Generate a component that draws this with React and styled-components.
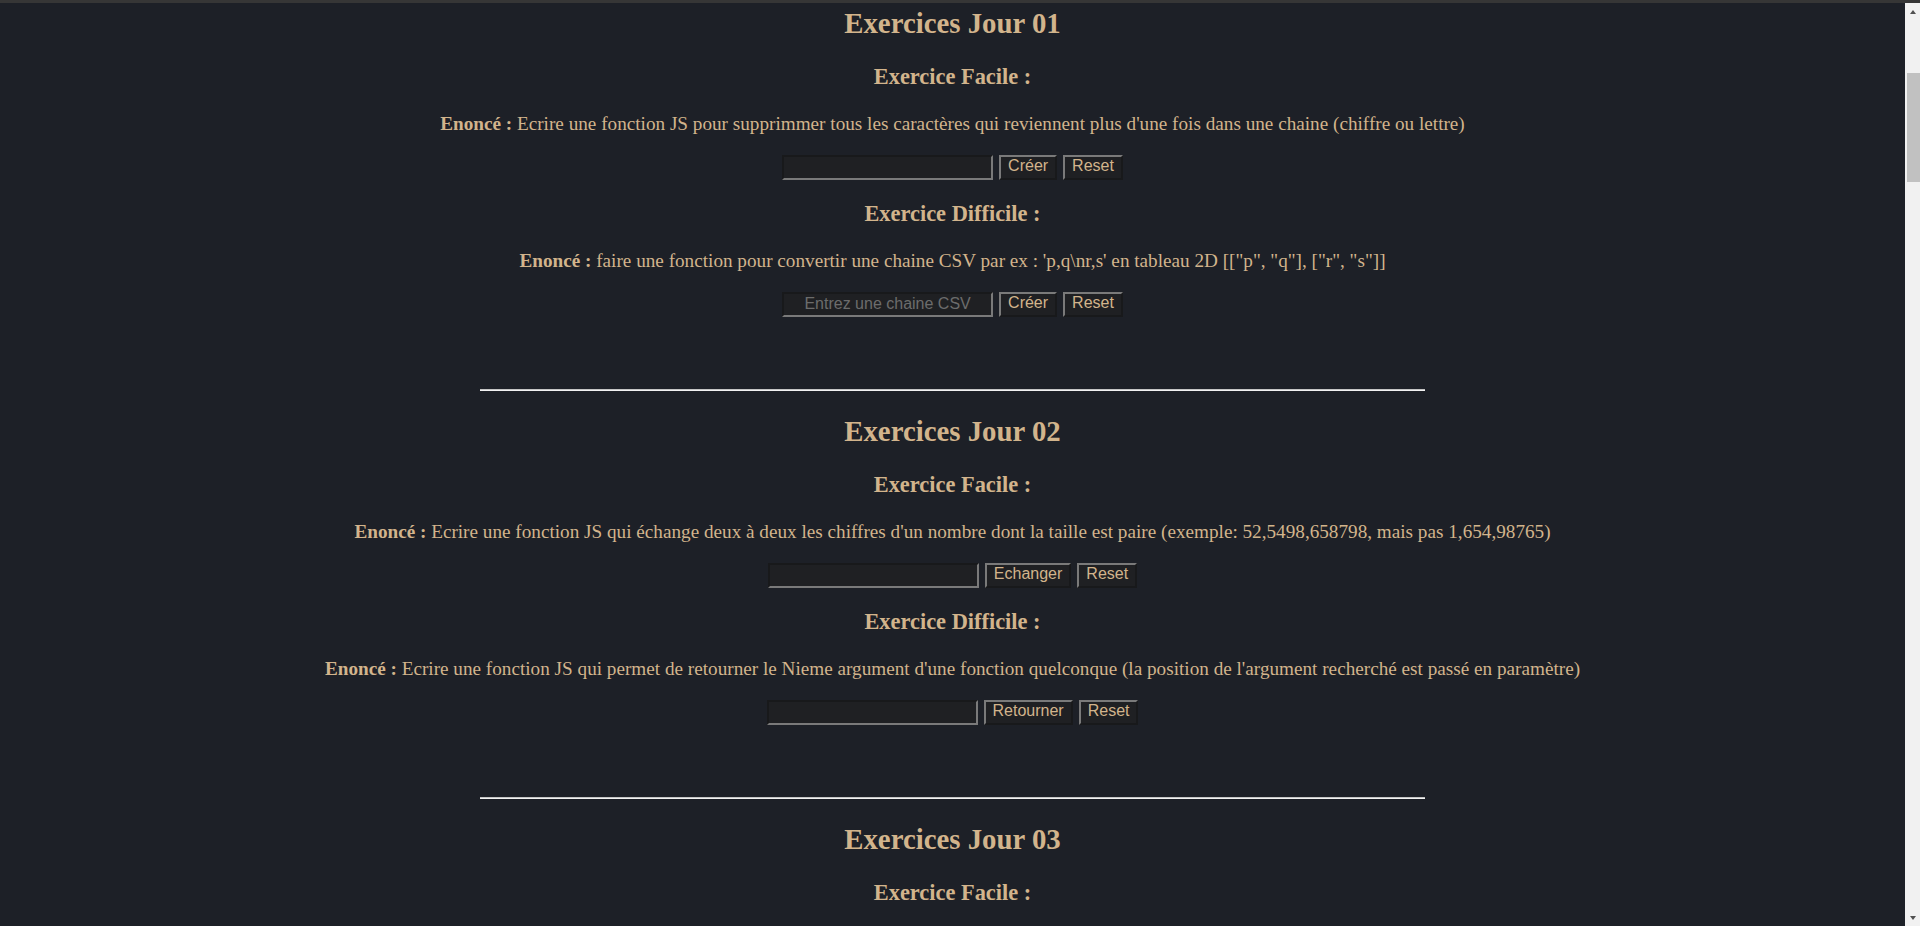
import React from "react";
import styled, { createGlobalStyle } from "styled-components";

const GlobalStyle = createGlobalStyle`
  html, body {
    margin: 0;
    padding: 0;
    height: 100%;
    overflow: hidden;
    background: #1d2027;
  }
`;

const Window = styled.div`
  display: flex;
  flex-direction: column;
  height: 100vh;
`;

const TopBar = styled.div`
  flex: none;
  height: 3px;
  background: #363636;
`;

const Viewport = styled.div`
  flex: 1;
  min-height: 0;
  display: flex;
`;

const Scroller = styled.main`
  flex: 1;
  min-width: 0;
  overflow-y: auto;
  scrollbar-width: none;
  background: #1d2027;
  color: #d2b48c;
  font-family: "Liberation Serif", "Times New Roman", serif;
  padding-top: 3px;
  box-sizing: border-box;

  &::-webkit-scrollbar {
    display: none;
  }
`;

/* classic scrollbar column, as in the screenshot */
const Rail = styled.div`
  flex: none;
  width: 15px;
  display: flex;
  flex-direction: column;
  background: #f1f1f1;
`;

const ArrowButton = styled.div`
  flex: none;
  height: 17px;
  display: flex;
  align-items: center;
  justify-content: center;

  &::before {
    content: "";
    width: 0;
    height: 0;
    border-left: 3.5px solid transparent;
    border-right: 3.5px solid transparent;
    ${(p) =>
      p.down
        ? "border-top: 4px solid #505050;"
        : "border-bottom: 4px solid #505050;"}
  }
`;

const Thumb = styled.div`
  flex: none;
  margin: 53px 0 0 2px;
  height: 109px;
  background: #c1c1c1;
`;

const Track = styled.div`
  flex: 1;
`;

const Day = styled.section`
  display: flex;
  flex-direction: column;
  align-items: center;
`;

const DayTitle = styled.h1`
  margin: 0 0 23px;
  font-size: 28.8px;
  line-height: 34px;
  font-weight: bold;
`;

const Exercise = styled.div`
  display: flex;
  flex-direction: column;
  align-items: center;
  margin-bottom: ${(p) => (p.last ? "72px" : "20px")};
`;

const Level = styled.h2`
  margin: 0 0 22px;
  font-size: 22.4px;
  line-height: 28px;
  font-weight: bold;
`;

const Statement = styled.p`
  margin: 0 0 20px;
  font-size: 19.2px;
  line-height: 22px;
  text-align: center;

  b {
    font-weight: bold;
  }
`;

const Form = styled.form`
  display: flex;
  justify-content: center;
  gap: 6px;
  height: 25px;
`;

const Input = styled.input`
  box-sizing: border-box;
  width: 211px;
  height: 25px;
  padding: 0 2px 2px;
  border-width: 2px;
  border-style: solid;
  border-color: #18191b #7a7a7a #7a7a7a #18191b;
  background: #1f2023;
  color: #d2b48c;
  font-family: "Liberation Sans", Arial, sans-serif;
  font-size: 16px;
  text-align: center;
  outline: none;

  &::placeholder {
    color: #6c6c6c;
  }
`;

const Button = styled.button`
  box-sizing: border-box;
  height: 25px;
  padding: 0 7px 3px;
  border-width: 2px;
  border-style: solid;
  border-color: #7a7a7a #18191b #18191b #7a7a7a;
  background: #1f2023;
  color: #d2b48c;
  font-family: "Liberation Sans", Arial, sans-serif;
  font-size: 16px;
  line-height: 18px;
  cursor: pointer;
`;

const Rule = styled.hr`
  width: 945px;
  height: 0;
  margin: 0 auto 23px;
  border: none;
  border-top: 1px solid #c4c4c4;
  border-bottom: 1px solid #f2f2f2;
`;

const days = [
  {
    n: "01",
    exercises: [
      {
        level: "Facile",
        text: "Ecrire une fonction JS pour supprimmer tous les caractères qui reviennent plus d'une fois dans une chaine (chiffre ou lettre)",
        action: "Créer",
      },
      {
        level: "Difficile",
        text: "faire une fonction pour convertir une chaine CSV par ex : 'p,q\\nr,s' en tableau 2D [[\"p\", \"q\"], [\"r\", \"s\"]]",
        action: "Créer",
        placeholder: "Entrez une chaine CSV",
      },
    ],
  },
  {
    n: "02",
    exercises: [
      {
        level: "Facile",
        text: "Ecrire une fonction JS qui échange deux à deux les chiffres d'un nombre dont la taille est paire (exemple: 52,5498,658798, mais pas 1,654,98765)",
        action: "Echanger",
      },
      {
        level: "Difficile",
        text: "Ecrire une fonction JS qui permet de retourner le Nieme argument d'une fonction quelconque (la position de l'argument recherché est passé en paramètre)",
        action: "Retourner",
      },
    ],
  },
];

const ExerciseBlock = ({ level, text, action, placeholder, last }) => (
  <Exercise last={last}>
    <Level>Exercice {level} :</Level>
    <Statement>
      <b>Enoncé :</b> {text}
    </Statement>
    <Form onSubmit={(e) => e.preventDefault()}>
      <Input type="text" placeholder={placeholder} />
      <Button type="submit">{action}</Button>
      <Button type="reset">Reset</Button>
    </Form>
  </Exercise>
);

const App = () => {
  return (
    <>
      <GlobalStyle />
      <Window>
        <TopBar />
        <Viewport>
          <Scroller>
            {days.map((day) => (
              <React.Fragment key={day.n}>
                <Day>
                  <DayTitle>Exercices Jour {day.n}</DayTitle>
                  {day.exercises.map((ex, i) => (
                    <ExerciseBlock
                      key={ex.level}
                      {...ex}
                      last={i === day.exercises.length - 1}
                    />
                  ))}
                </Day>
                <Rule />
              </React.Fragment>
            ))}
            <Day>
              <DayTitle>Exercices Jour 03</DayTitle>
              <Level>Exercice Facile :</Level>
            </Day>
          </Scroller>
          <Rail>
            <ArrowButton />
            <Thumb />
            <Track />
            <ArrowButton down />
          </Rail>
        </Viewport>
      </Window>
    </>
  );
};

export default App;
